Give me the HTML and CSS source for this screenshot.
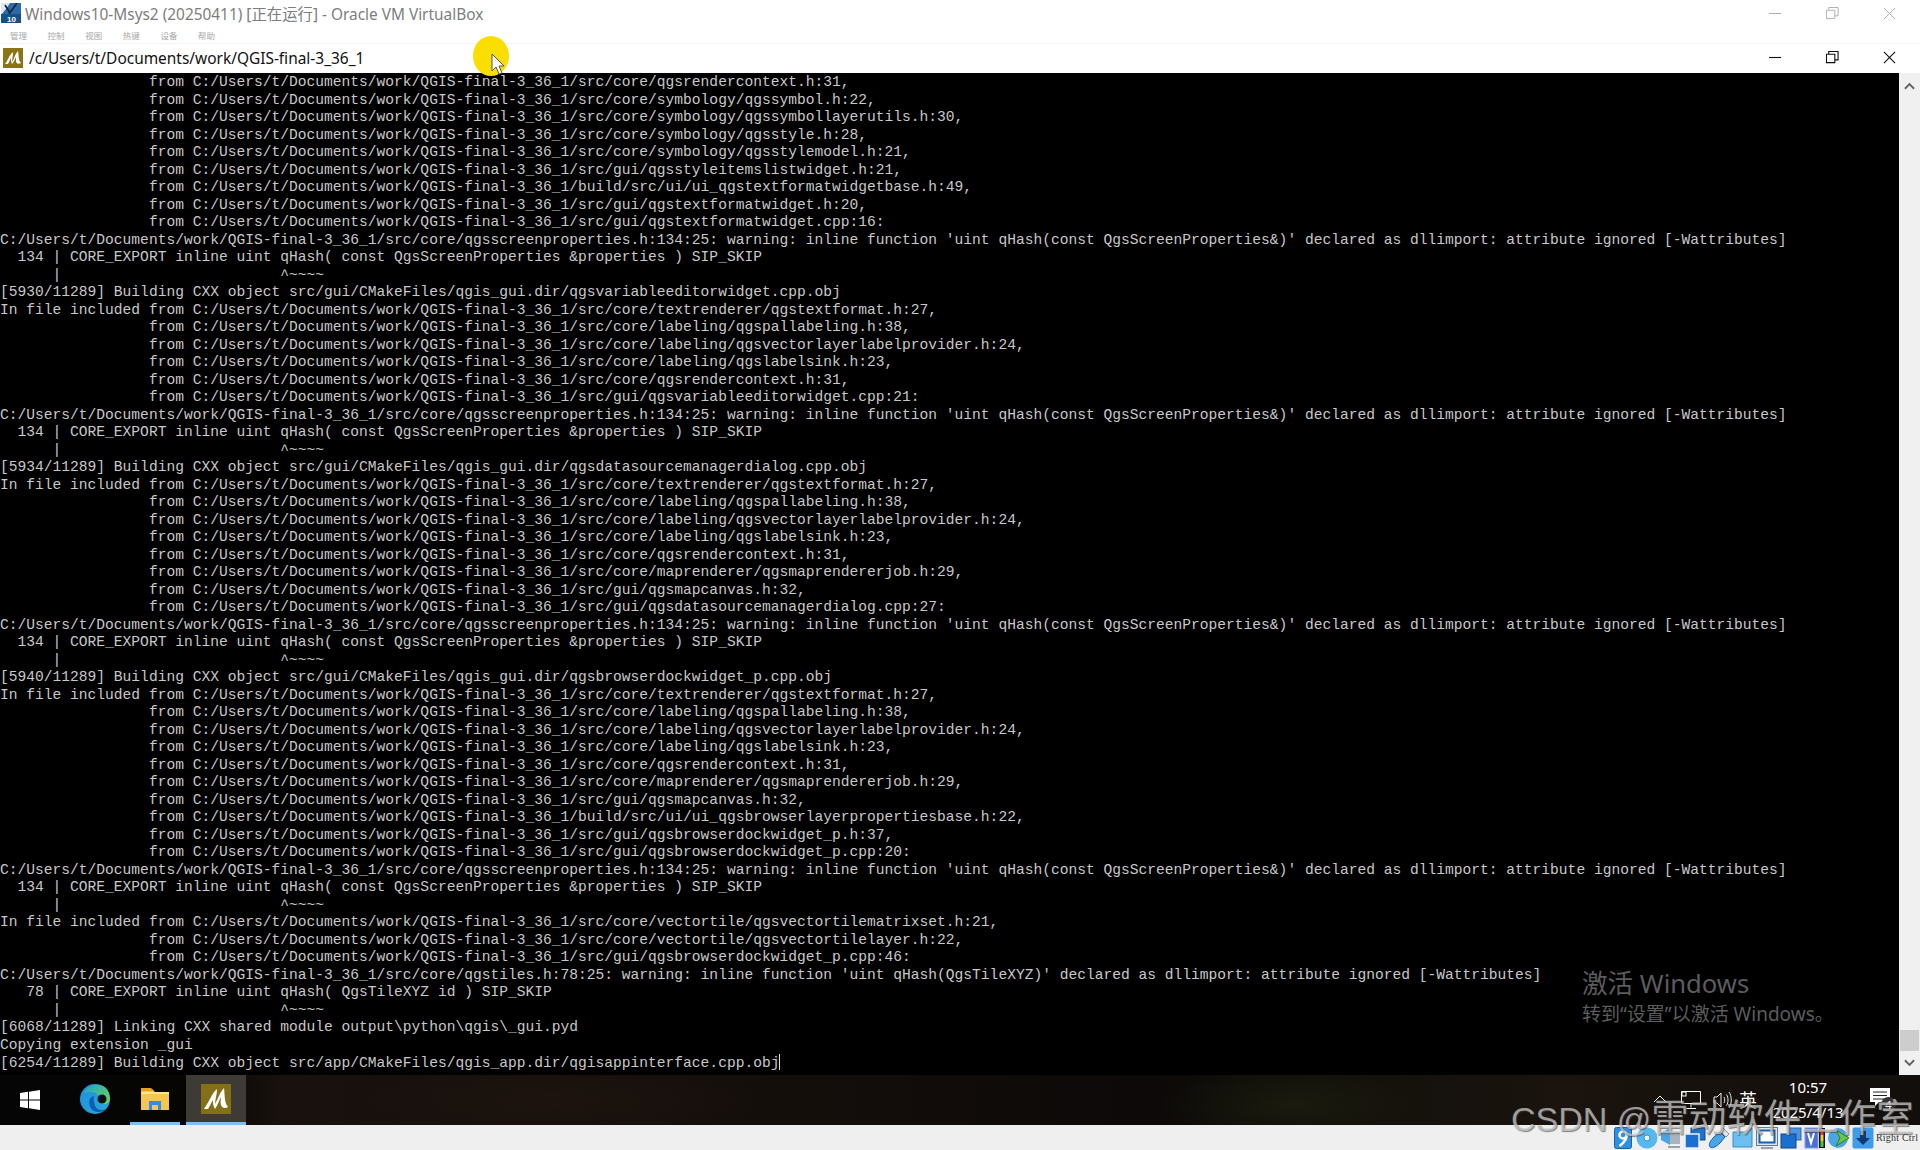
FILE: index.html
```html
<!DOCTYPE html>
<html lang="zh">
<head>
<meta charset="utf-8">
<title>Windows10-Msys2</title>
<link rel="stylesheet" href="styles.css">
</head>
<body>
<div class="desktop">
  <header class="vm-title">
    <div class="vm-title-row">
      <svg class="vbox-icon" viewBox="0 0 20 20"><rect width="20" height="20" fill="#2a6aa8"/><path d="M0 0h9L5 6 0 12z" fill="#dfe8f2"/><path d="M4 2l5 8M16 0L8 11" stroke="#10243c" stroke-width="1.6"/><rect x="0" y="11" width="20" height="9" fill="#174f86"/><text x="6" y="19" class="vbox-ten">10</text></svg>
      <span class="vm-title-text">Windows10-Msys2 (20250411) [正在运行] - Oracle VM VirtualBox</span>
      <div class="win-buttons win-buttons-faint">
        <svg viewBox="0 0 14 14"><path d="M0 7h13"/></svg>
        <svg viewBox="0 0 14 14"><path d="M.5 3.500h9v9h-9zM3 3V.5h10v9h-3"/></svg>
        <svg viewBox="0 0 14 14"><path d="M1 1l12 12M13 1L1 13"/></svg>
      </div>
    </div>
    <nav class="vm-menu"><span>管理</span><span>控制</span><span>视图</span><span>热键</span><span>设备</span><span>帮助</span></nav>
  </header>
  <div class="term-title">
    <svg class="msys-icon" viewBox="0 0 20 20"><rect width="20" height="20" fill="#8a7415"/><path d="M2 16C5 12 7 6 10 4c0 4-1 7-1 10 2-3 3-8 6-11 1 4 0 9 3 12-2 1-4 1-5-1 0-2 0-4 0-5-1 2-2 5-4 7-1-2-1-4-1-6-1 2-2 4-3 6z" fill="#fff"/></svg>
    <span class="term-title-text">/c/Users/t/Documents/work/QGIS-final-3_36_1</span>
    <div class="win-buttons win-buttons-dark">
      <svg viewBox="0 0 14 14"><path d="M0 7h13"/></svg>
      <svg viewBox="0 0 14 14"><path d="M.5 3.500h9v9h-9zM3 3V.5h10v9h-3"/></svg>
      <svg viewBox="0 0 14 14"><path d="M1 1l12 12M13 1L1 13"/></svg>
    </div>
  </div>
  <main class="term">
<pre class="term-text">                 from C:/Users/t/Documents/work/QGIS-final-3_36_1/src/core/qgsrendercontext.h:31,
                 from C:/Users/t/Documents/work/QGIS-final-3_36_1/src/core/symbology/qgssymbol.h:22,
                 from C:/Users/t/Documents/work/QGIS-final-3_36_1/src/core/symbology/qgssymbollayerutils.h:30,
                 from C:/Users/t/Documents/work/QGIS-final-3_36_1/src/core/symbology/qgsstyle.h:28,
                 from C:/Users/t/Documents/work/QGIS-final-3_36_1/src/core/symbology/qgsstylemodel.h:21,
                 from C:/Users/t/Documents/work/QGIS-final-3_36_1/src/gui/qgsstyleitemslistwidget.h:21,
                 from C:/Users/t/Documents/work/QGIS-final-3_36_1/build/src/ui/ui_qgstextformatwidgetbase.h:49,
                 from C:/Users/t/Documents/work/QGIS-final-3_36_1/src/gui/qgstextformatwidget.h:20,
                 from C:/Users/t/Documents/work/QGIS-final-3_36_1/src/gui/qgstextformatwidget.cpp:16:
C:/Users/t/Documents/work/QGIS-final-3_36_1/src/core/qgsscreenproperties.h:134:25: warning: inline function 'uint qHash(const QgsScreenProperties&amp;)' declared as dllimport: attribute ignored [-Wattributes]
  134 | CORE_EXPORT inline uint qHash( const QgsScreenProperties &amp;properties ) SIP_SKIP
      |                         ^~~~~
[5930/11289] Building CXX object src/gui/CMakeFiles/qgis_gui.dir/qgsvariableeditorwidget.cpp.obj
In file included from C:/Users/t/Documents/work/QGIS-final-3_36_1/src/core/textrenderer/qgstextformat.h:27,
                 from C:/Users/t/Documents/work/QGIS-final-3_36_1/src/core/labeling/qgspallabeling.h:38,
                 from C:/Users/t/Documents/work/QGIS-final-3_36_1/src/core/labeling/qgsvectorlayerlabelprovider.h:24,
                 from C:/Users/t/Documents/work/QGIS-final-3_36_1/src/core/labeling/qgslabelsink.h:23,
                 from C:/Users/t/Documents/work/QGIS-final-3_36_1/src/core/qgsrendercontext.h:31,
                 from C:/Users/t/Documents/work/QGIS-final-3_36_1/src/gui/qgsvariableeditorwidget.cpp:21:
C:/Users/t/Documents/work/QGIS-final-3_36_1/src/core/qgsscreenproperties.h:134:25: warning: inline function 'uint qHash(const QgsScreenProperties&amp;)' declared as dllimport: attribute ignored [-Wattributes]
  134 | CORE_EXPORT inline uint qHash( const QgsScreenProperties &amp;properties ) SIP_SKIP
      |                         ^~~~~
[5934/11289] Building CXX object src/gui/CMakeFiles/qgis_gui.dir/qgsdatasourcemanagerdialog.cpp.obj
In file included from C:/Users/t/Documents/work/QGIS-final-3_36_1/src/core/textrenderer/qgstextformat.h:27,
                 from C:/Users/t/Documents/work/QGIS-final-3_36_1/src/core/labeling/qgspallabeling.h:38,
                 from C:/Users/t/Documents/work/QGIS-final-3_36_1/src/core/labeling/qgsvectorlayerlabelprovider.h:24,
                 from C:/Users/t/Documents/work/QGIS-final-3_36_1/src/core/labeling/qgslabelsink.h:23,
                 from C:/Users/t/Documents/work/QGIS-final-3_36_1/src/core/qgsrendercontext.h:31,
                 from C:/Users/t/Documents/work/QGIS-final-3_36_1/src/core/maprenderer/qgsmaprendererjob.h:29,
                 from C:/Users/t/Documents/work/QGIS-final-3_36_1/src/gui/qgsmapcanvas.h:32,
                 from C:/Users/t/Documents/work/QGIS-final-3_36_1/src/gui/qgsdatasourcemanagerdialog.cpp:27:
C:/Users/t/Documents/work/QGIS-final-3_36_1/src/core/qgsscreenproperties.h:134:25: warning: inline function 'uint qHash(const QgsScreenProperties&amp;)' declared as dllimport: attribute ignored [-Wattributes]
  134 | CORE_EXPORT inline uint qHash( const QgsScreenProperties &amp;properties ) SIP_SKIP
      |                         ^~~~~
[5940/11289] Building CXX object src/gui/CMakeFiles/qgis_gui.dir/qgsbrowserdockwidget_p.cpp.obj
In file included from C:/Users/t/Documents/work/QGIS-final-3_36_1/src/core/textrenderer/qgstextformat.h:27,
                 from C:/Users/t/Documents/work/QGIS-final-3_36_1/src/core/labeling/qgspallabeling.h:38,
                 from C:/Users/t/Documents/work/QGIS-final-3_36_1/src/core/labeling/qgsvectorlayerlabelprovider.h:24,
                 from C:/Users/t/Documents/work/QGIS-final-3_36_1/src/core/labeling/qgslabelsink.h:23,
                 from C:/Users/t/Documents/work/QGIS-final-3_36_1/src/core/qgsrendercontext.h:31,
                 from C:/Users/t/Documents/work/QGIS-final-3_36_1/src/core/maprenderer/qgsmaprendererjob.h:29,
                 from C:/Users/t/Documents/work/QGIS-final-3_36_1/src/gui/qgsmapcanvas.h:32,
                 from C:/Users/t/Documents/work/QGIS-final-3_36_1/build/src/ui/ui_qgsbrowserlayerpropertiesbase.h:22,
                 from C:/Users/t/Documents/work/QGIS-final-3_36_1/src/gui/qgsbrowserdockwidget_p.h:37,
                 from C:/Users/t/Documents/work/QGIS-final-3_36_1/src/gui/qgsbrowserdockwidget_p.cpp:20:
C:/Users/t/Documents/work/QGIS-final-3_36_1/src/core/qgsscreenproperties.h:134:25: warning: inline function 'uint qHash(const QgsScreenProperties&amp;)' declared as dllimport: attribute ignored [-Wattributes]
  134 | CORE_EXPORT inline uint qHash( const QgsScreenProperties &amp;properties ) SIP_SKIP
      |                         ^~~~~
In file included from C:/Users/t/Documents/work/QGIS-final-3_36_1/src/core/vectortile/qgsvectortilematrixset.h:21,
                 from C:/Users/t/Documents/work/QGIS-final-3_36_1/src/core/vectortile/qgsvectortilelayer.h:22,
                 from C:/Users/t/Documents/work/QGIS-final-3_36_1/src/gui/qgsbrowserdockwidget_p.cpp:46:
C:/Users/t/Documents/work/QGIS-final-3_36_1/src/core/qgstiles.h:78:25: warning: inline function 'uint qHash(QgsTileXYZ)' declared as dllimport: attribute ignored [-Wattributes]
   78 | CORE_EXPORT inline uint qHash( QgsTileXYZ id ) SIP_SKIP
      |                         ^~~~~
[6068/11289] Linking CXX shared module output\python\qgis\_gui.pyd
Copying extension _gui
[6254/11289] Building CXX object src/app/CMakeFiles/qgis_app.dir/qgisappinterface.cpp.obj<span class="term-cursor"></span></pre>
    <aside class="scrollbar">
      <svg viewBox="0 0 12 8"><path d="M1 7l5-5 5 5"/></svg>
      <div class="scroll-track"><div class="scroll-thumb"></div></div>
      <svg viewBox="0 0 12 8"><path d="M1 1l5 5 5-5"/></svg>
    </aside>
    <div class="activate">
      <div class="activate-big">激活 Windows</div>
      <div class="activate-small">转到“设置”以激活 Windows。</div>
    </div>
  </main>
  <footer class="taskbar">
    <div class="task-start">
      <svg viewBox="0 0 20 20"><path d="M0 3l8-1.200v7.700H0zM9 1.700L20 0v9.500H9zM0 10.500h8v7.700L0 17zM9 10.500h11V20L9 18.300z" fill="#fff"/></svg>
    </div>
    <div class="task-item">
      <svg class="icon-edge" viewBox="0 0 30 30"><defs><linearGradient id="edgeA" x1="0" y1="0" x2="1" y2="1"><stop offset="0" stop-color="#1d8fe0"/><stop offset="1" stop-color="#2aa8d8"/></linearGradient><linearGradient id="edgeB" x1="0" y1="0" x2="1" y2="1"><stop offset="0" stop-color="#1fa4cf"/><stop offset="1" stop-color="#6fd84e"/></linearGradient></defs><circle cx="15" cy="15" r="15" fill="url(#edgeA)"/><path d="M4 9C7 2 16-1 23 2c5 2 7 8 7 13 0 3-3 5-7 5-3 0-5-1-5-3 2-1 2-3 1-5-2-4-9-5-15-3z" fill="url(#edgeB)"/><path d="M14 12c-4 1-6 5-4 10 1 4 5 6 9 6 3 0 5-1 7-3-4 2-9 1-11-3-1-3-2-7-1-10z" fill="#0b5fb0"/><circle cx="22" cy="15" r="4.500" fill="#061018"/></svg>
    </div>
    <div class="task-item task-open">
      <svg class="icon-folder" viewBox="0 0 28 23"><path d="M0 2h11l3 3h14v18H0z" fill="#f4c74e"/><path d="M0 1h10l3 3H0z" fill="#e5a11c"/><path d="M0 5h28v2H0z" fill="#ffe38a"/><path d="M8 14h12v9h-3v-5h-6v5H8z" fill="#2f8fe0"/></svg>
    </div>
    <div class="task-item task-open task-active">
      <svg class="icon-msys" viewBox="0 0 30 30"><rect width="30" height="30" fill="#85701a"/><path d="M3 25C8 18 11 9 16 5c0 6-2 11-2 15 3-5 5-12 9-16 1 7 0 14 4 19-3 2-6 1-7-2-1-3 0-6 0-8-2 3-3 8-6 12-2-3-2-6-2-9-2 3-3 6-5 9z" fill="#fff"/></svg>
    </div>
    <div class="tray">
      <svg class="tray-chevron" viewBox="0 0 14 8"><path d="M1 7l6-6 6 6"/></svg>
      <svg class="tray-net" viewBox="0 0 20 20"><path d="M.5 1.500h19v12H.5zM10 13.500v4M5 18.500h10"/><rect x="1" y="2" width="4" height="4"/></svg>
      <svg class="tray-sound" viewBox="0 0 20 20"><path d="M1 7h3l4-4v14l-4-4H1zM11 7c1 2 1 4 0 6M13.500 4.500c2 3 2 8 0 11M16 2c3 4 3 12 0 16"/></svg>
      <span class="tray-lang">英</span>
      <div class="tray-clock"><span>10:57</span><span>2025/4/13</span></div>
      <div class="tray-note">
        <svg viewBox="0 0 20 18"><path d="M0 0h20v14H9l-4 4v-4H0z" fill="#fff"/><path d="M3 4h14M3 7.500h14M3 11h14" stroke="#222" stroke-width="1"/></svg>
        <span class="tray-badge">4</span>
      </div>
    </div>
  </footer>
  <div class="statusbar">
    <svg viewBox="0 0 18 22"><rect x=".5" y=".5" width="17" height="21" rx="2" fill="#2f8fe0" stroke="#1a5fa8"/><circle cx="9" cy="8" r="3.500" fill="none" stroke="#fff" stroke-width="2.500"/><path d="M12.500 9c0 4-3 7-7 10" stroke="#fff" stroke-width="2.500" fill="none"/></svg>
    <svg viewBox="0 0 22 22"><circle cx="11" cy="11" r="10.500" fill="#58b8ee"/><circle cx="11" cy="11" r="3" fill="#e8f6ff" stroke="#2f8fe0"/></svg>
    <svg viewBox="0 0 22 22"><path d="M1 6l9-5v17l-9-5z" fill="#4aa5e6"/><rect x="10" y="6" width="10" height="11" fill="#aab4bc"/><rect x="8" y="19" width="12" height="2" fill="#9aa2a8"/></svg>
    <svg viewBox="0 0 22 22"><rect x="7" y="1" width="14" height="12" fill="#2272cc" stroke="#13498c"/><rect x="1" y="7" width="14" height="14" fill="#1a6fd0" stroke="#e9f2fb" stroke-width="1.500"/></svg>
    <svg viewBox="0 0 22 22"><path d="M2 20c-2-3 1-7 4-10l6-5 5 5-5 6c-3 3-7 6-10 4z" fill="#4aa5e6" stroke="#1a5fa8"/><path d="M15 1l6 6-3 3-6-6z" fill="#dfe6ec" stroke="#8a949c"/></svg>
    <svg viewBox="0 0 22 22"><path d="M1 5h12l7-4v19H1z" fill="#6cc0ef" stroke="#3a8cc8"/></svg>
    <svg viewBox="0 0 22 22"><rect x=".5" y=".5" width="21" height="18" fill="#d8e6f2" stroke="#6a7a88"/><rect x="3.500" y="3.500" width="15" height="12" fill="#fff" stroke="#1a5fa8" stroke-width="2"/><rect x="5" y="20" width="12" height="2" fill="#9aa2a8"/></svg>
    <svg viewBox="0 0 22 22"><rect x="9" y="1" width="12" height="12" fill="#4d94e0" stroke="#2a68b0"/><rect x="1" y="7" width="15" height="14" fill="#1a6fd0" stroke="#13498c"/></svg>
    <svg viewBox="0 0 22 22"><rect x="1" y="1" width="13" height="20" fill="#4a6fd8" stroke="#8aa0e0"/><path d="M4 6l3 10 3-10" fill="none" stroke="#fff" stroke-width="2"/><rect x="15" y="1" width="6" height="20" fill="#111"/><rect x="16.500" y="2" width="3" height="6" fill="#e44"/><rect x="16.500" y="8" width="3" height="6" fill="#ec3"/><rect x="16.500" y="14" width="3" height="6" fill="#4c4"/></svg>
    <svg viewBox="0 0 22 22"><circle cx="10" cy="11" r="10" fill="#4aa5e6"/><path d="M8 3l13 8-13 8 4-8z" fill="#6cc644" stroke="#2e7d1e"/></svg>
    <svg viewBox="0 0 22 22"><rect x=".5" y=".5" width="21" height="21" rx="2" fill="#3d9be9"/><path d="M8 4h6v7h4l-7 7-7-7h4z" fill="#123a6e"/></svg>
    <span class="host-key">Right Ctrl</span>
  </div>
  <div class="pointer-halo"></div>
  <svg class="pointer" viewBox="0 0 14 22"><path d="M1 1v17l4-4 3 7 3-1-3-7h5z" fill="#fff" stroke="#555"/></svg>
  <div class="csdn-mark"><span class="csdn-latin">CSDN @</span>雷动软件工作室</div>
</div>
</body>
</html>
```

FILE: styles.css
```css
* { box-sizing: border-box; }
html, body { margin: 0; padding: 0; background: #000; }
.desktop {
  position: relative;
  width: 1920px;
  height: 1150px;
  overflow: hidden;
  display: flex;
  flex-direction: column;
  font-family: "Noto Sans", "Noto Sans CJK SC", sans-serif;
}

/* VirtualBox title */
.vm-title { height: 44px; background: #fff; border-bottom: 1px solid #f3f3f3; flex: none; }
.vm-title-row { height: 26px; display: flex; align-items: center; padding-left: 1px; }
.vbox-icon { width: 20px; height: 20px; margin-right: 4px; }
.vbox-ten { font: bold 8px "Liberation Sans", sans-serif; fill: #fff; }
.vm-title-text { font-size: 15.400px; color: #7d7d7d; white-space: nowrap; }
.win-buttons { margin-left: auto; display: flex; gap: 44px; padding-right: 24px; align-items: center; }
.win-buttons svg { width: 13px; height: 13px; fill: none; stroke-width: 1; }
.win-buttons-faint svg { stroke: #aaa; }
.win-buttons-dark svg { stroke: #111; stroke-width: 1.2; }
.vm-menu { display: flex; gap: 20.600px; padding: 3px 0 0 10px; font-size: 8.500px; color: #a8a8a8; line-height: 14px; }

/* MSYS title */
.term-title { height: 29px; background: #fff; flex: none; display: flex; align-items: center; padding: 0 0 2px 3px; }
.msys-icon { width: 20px; height: 20px; margin-right: 6px; }
.term-title-text { font-size: 15.450px; color: #111; white-space: nowrap; }

/* Terminal */
.term { position: relative; flex: 1; display: flex; background: #000; min-height: 0; }
.term-text {
  flex: 1;
  margin: 0;
  padding-top: 1px;
  font: 14.600px/17.500px "Liberation Mono", monospace;
  color: #c8c8c8;
  white-space: pre;
  overflow: hidden;
}
.term-cursor { display: inline-block; width: 1px; height: 16px; background: #ddd; vertical-align: -3px; }
.scrollbar { width: 21px; flex: none; background: #f0f0f0; display: flex; flex-direction: column; align-items: center; padding: 9px 0 8px; }
.scrollbar svg { width: 11px; height: 8px; fill: none; stroke: #606060; stroke-width: 2; flex: none; }
.scroll-track { flex: 1; width: 100%; display: flex; flex-direction: column; justify-content: flex-end; padding-bottom: 8px; }
.scroll-thumb { height: 21px; background: #cdcdcd; margin: 0 1px; }
.activate { position: absolute; left: 1582px; top: 893px; color: #5c5c5c; white-space: nowrap; }
.activate-big { font-size: 25.600px; line-height: 35px; }
.activate-small { font-size: 19px; line-height: 26px; }

/* Taskbar */
.taskbar {
  height: 50px;
  flex: none;
  display: flex;
  color: #fff;
  background:
    radial-gradient(ellipse 130px 40px at 1290px 30px, rgba(40,42,20,.4), transparent),
    radial-gradient(ellipse 200px 40px at 560px 25px, rgba(50,32,22,.25), transparent),
    linear-gradient(90deg, #050505 0, #060504 190px, #18110d 280px, #140e0b 800px, #0c0908 1150px, #11100a 1300px, #1a130e 1560px, #120e0b 1920px);
}
.task-start { width: 60px; display: flex; align-items: center; justify-content: center; }
.task-start svg { width: 20px; height: 20px; }
.task-item { width: 50px; margin-left: 10px; display: flex; align-items: center; justify-content: center; border-bottom: 3px solid transparent; }
.task-item:first-of-type { margin-left: 0; }
.task-open { border-bottom-color: #7cc0f0; width: 50px; }
.task-active { width: 60px; margin-left: 6px; background: #3e3b37; }
.icon-edge { width: 30px; height: 30px; }
.icon-folder { width: 28px; height: 23px; }
.icon-msys { width: 30px; height: 30px; }
.tray { margin-left: auto; display: flex; align-items: center; padding-right: 30px; }
.tray-chevron { width: 14px; height: 8px; fill: none; stroke: #eee; stroke-width: 1; margin: 0 0 3px; }
.tray-net { width: 20px; height: 20px; fill: none; stroke: #fff; margin-left: 14px; }
.tray-sound { width: 20px; height: 20px; fill: none; stroke: #eee; margin-left: 12px; }
.tray-lang { font-size: 18px; line-height: 20px; margin-left: 6px; }
.tray-clock { width: 86px; margin-left: 8px; display: flex; flex-direction: column; align-items: center; font-size: 15px; line-height: 25px; }
.tray-note { position: relative; width: 20px; height: 18px; margin: 0 0 6px 19px; }
.tray-note svg { width: 20px; height: 18px; display: block; }
.tray-badge { position: absolute; left: 11px; top: 9px; width: 15px; height: 15px; border-radius: 50%; background: #333; font-size: 11px; line-height: 15px; text-align: center; }

/* Status bar */
.statusbar { height: 25px; flex: none; background: #efefef; display: flex; align-items: center; justify-content: flex-end; gap: 2px; }
.statusbar svg { width: 22px; height: 22px; flex: none; }
.host-key { font: 10px/14px "Liberation Serif", serif; color: #333; letter-spacing: .2px; width: 44px; white-space: nowrap; }

/* Overlays */
.pointer-halo { position: absolute; left: 473px; top: 36px; width: 36px; height: 40px; border-radius: 50%; background: #fade00; }
.pointer { position: absolute; left: 491px; top: 53px; width: 14px; height: 22px; }
.csdn-mark {
  position: absolute;
  left: 1511px;
  top: 1093px;
  font: 37.500px/50px "Liberation Sans", "Noto Sans CJK SC", sans-serif;
  color: rgba(205,205,205,.72);
  text-shadow: 1px 1px 1px rgba(60,60,60,.6);
  white-space: nowrap;
}
.csdn-latin { font-size: 34px; }
```
